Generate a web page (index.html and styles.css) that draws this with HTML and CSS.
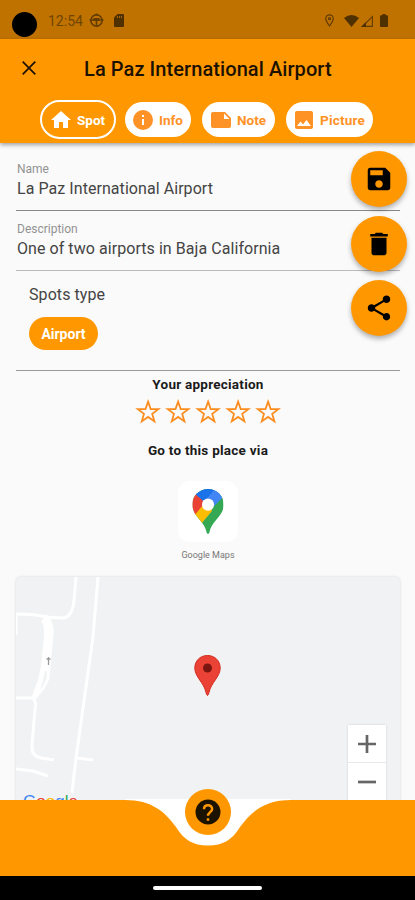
FILE: index.html
```html
<!DOCTYPE html>
<html lang="en">
<head>
    <meta charset="UTF-8">
    <meta name="viewport" content="width=device-width, initial-scale=1.0">
    <title>La Paz International Airport</title>
    <link rel="stylesheet" href="styles.css">
</head>
<body>
<div class="phone">
    <!-- Status bar -->
    <div class="status-bar">
        <span class="camera"></span>
        <span class="time">12:54</span>
        <svg class="status-wheel" width="15" height="15" viewBox="0 0 15 15" fill="none" stroke="#623c00" stroke-width="1.6">
            <circle cx="7.5" cy="7.5" r="5.6"/>
            <path d="M0.5 7h14M7.5 8v5M7.5 0.5v2" />
            <path d="M4.5 5h6v3h-6z" fill="#623c00" stroke="none"/>
        </svg>
        <svg class="status-card" width="10" height="13" viewBox="0 0 10 13">
            <path d="M3.5 0H9q1 0 1 1v11q0 1-1 1H1q-1 0-1-1V3.5z" fill="#4f3000"/>
            <path d="M3.5 2v2M5.5 2v2M7.5 2v2" stroke="#a76500"/>
        </svg>
        <span class="spacer"></span>
        <svg class="status-pin" width="9" height="13" viewBox="0 0 9 13" fill="none" stroke="#623c00" stroke-width="1.2">
            <path d="M4.5 12C2 8.7 .7 6.6 .7 4.6a3.8 3.8 0 0 1 7.6 0C8.3 6.6 7 8.7 4.5 12z"/>
            <circle cx="4.5" cy="4.7" r="1"/>
        </svg>
        <svg width="15" height="12" viewBox="0 0 15 12"><path d="M0 3Q7.5-3 15 3L7.5 12z" fill="#4f3000"/></svg>
        <svg class="status-signal" width="12" height="12" viewBox="0 0 12 12"><path d="M1.5 11.4L11.4 1.5v9.9z" fill="none" stroke="#623c00" stroke-width="1.1"/><path d="M0 12l5-5v5z" fill="#4f3000"/></svg>
        <svg class="status-battery" width="8" height="13" viewBox="0 0 8 13"><path d="M2.5 0h3v1.3H7q1 0 1 1V12q0 1-1 1H1q-1 0-1-1V2.3q0-1 1-1h1.5z" fill="#4f3000"/></svg>
    </div>

    <!-- App bar -->
    <div class="app-bar">
        <div class="title-row">
            <svg class="close" width="14" height="14" viewBox="0 0 14 14"><path d="M.7.7l12.6 12.6M13.3.7L.7 13.3" stroke="#1c1100" stroke-width="1.7"/></svg>
            <h1>La Paz International Airport</h1>
        </div>
        <div class="tabs">
            <div class="tab tab-active">
                <svg width="24" height="24" viewBox="0 0 24 24"><path d="M10 20v-6h4v6h5v-8h3L12 3 2 12h3v8z"/></svg>
                <span>Spot</span>
            </div>
            <div class="tab tab-info">
                <svg width="24" height="24" viewBox="0 0 24 24"><path d="M12 2a10 10 0 1 0 0 20 10 10 0 0 0 0-20zm1 15h-2v-6h2v6zm0-8h-2V7h2v2z"/></svg>
                <span>Info</span>
            </div>
            <div class="tab tab-note">
                <svg width="24" height="24" viewBox="0 0 24 24"><path d="M22 10l-6-6H4c-1.1 0-2 .9-2 2v12.01c0 1.1.9 1.99 2 1.99h16c1.1 0 2-.9 2-2v-8zm-7-4.5l5.5 5.5H15V5.5z"/></svg>
                <span>Note</span>
            </div>
            <div class="tab tab-picture">
                <svg width="24" height="24" viewBox="0 0 24 24"><path d="M21 19V5c0-1.1-.9-2-2-2H5c-1.1 0-2 .9-2 2v14c0 1.1.9 2 2 2h14c1.1 0 2-.9 2-2zM8.5 13.5l2.5 3.01L14.5 12l4.5 6H5l3.5-4.5z"/></svg>
                <span>Picture</span>
            </div>
        </div>
    </div>

    <!-- Spot details -->
    <div class="content">
        <div class="field">
            <div class="label">Name</div>
            <div class="value">La Paz International Airport</div>
        </div>
        <div class="field field-description">
            <div class="label">Description</div>
            <div class="value">One of two airports in Baja California</div>
        </div>
        <div class="spot-type">
            <div class="type-title">Spots type</div>
            <span class="chip">Airport</span>
        </div>

        <div class="heading">Your appreciation</div>
        <div class="stars">
            <svg viewBox="0 0 24 24"><path d="M12 3.2l2.2 6.3 6.6.1-5.3 4 1.9 6.4-5.4-3.8-5.4 3.8 1.9-6.4L3.2 9.6l6.6-.1z"/></svg>
            <svg viewBox="0 0 24 24"><path d="M12 3.2l2.2 6.3 6.6.1-5.3 4 1.9 6.4-5.4-3.8-5.4 3.8 1.9-6.4L3.2 9.6l6.6-.1z"/></svg>
            <svg viewBox="0 0 24 24"><path d="M12 3.2l2.2 6.3 6.6.1-5.3 4 1.9 6.4-5.4-3.8-5.4 3.8 1.9-6.4L3.2 9.6l6.6-.1z"/></svg>
            <svg viewBox="0 0 24 24"><path d="M12 3.2l2.2 6.3 6.6.1-5.3 4 1.9 6.4-5.4-3.8-5.4 3.8 1.9-6.4L3.2 9.6l6.6-.1z"/></svg>
            <svg viewBox="0 0 24 24"><path d="M12 3.2l2.2 6.3 6.6.1-5.3 4 1.9 6.4-5.4-3.8-5.4 3.8 1.9-6.4L3.2 9.6l6.6-.1z"/></svg>
        </div>
        <div class="heading heading-via">Go to this place via</div>
        <div class="maps-link">
            <div class="maps-logo">
                <svg width="32" height="45" viewBox="0 0 32 46">
                    <defs>
                        <clipPath id="pin"><path d="M16 0C7 0 0 7 0 16c0 12 13 17 14.6 28.4C14.9 46.3 17.1 46.3 17.4 44.4 19 33 32 28 32 16 32 7 25 0 16 0z"/></clipPath>
                    </defs>
                    <g clip-path="url(#pin)">
                        <path d="M0 0h32v46H0z" fill="#34a853"/>
                        <path d="M-2 28L11 13 23 19 7 38z" fill="#fbbc04"/>
                        <path d="M2 27L13 14 4 4H-2v23z" fill="#ea4335"/>
                        <path d="M3.5 5.5L12 13 20 15 29 6V0H3z" fill="#1a73e8"/>
                        <path d="M22 1L13 12 20 20 31 9 27 0z" fill="#4285f4"/>
                        <path d="M20 20L31 9v15H20z" fill="#34a853"/>
                    </g>
                    <circle cx="16" cy="16" r="6.2" fill="#fff"/>
                </svg>
            </div>
            <div class="maps-label">Google Maps</div>
        </div>

        <!-- Map -->
        <div class="map">
            <svg class="roads" width="384" height="240" viewBox="0 0 384 240" fill="none" stroke="#fff" stroke-width="3">
                <path d="M60 0L58 24Q56 41 46 41L31 40Q20 37 0 37" />
                <path d="M0 36V58" />
                <path d="M29 40Q37 46 36 57L32 101Q30 109 19 121" />
                <path d="M28 41Q34 46 32 64L29 94" stroke-width="9"/>
                <path d="M27 92L24 105 18 121" stroke-width="5"/>
                <path d="M0 121H17Q21 126 19 132L16 168Q15 179 25 181L38 183" />
                <path d="M82 0L77 60 60 181 56 216M61 181L77 183M0 192L17 194 32 199" />
                <path d="M32.5 80v8M30.5 82h4" stroke="#999" stroke-width="1.3"/>
            </svg>
            <svg class="marker" width="27" height="42" viewBox="0 0 27 42">
                <path d="M13.5 .5C6 .5 .8 6 .8 13c0 9 9.2 14.5 11.2 24.5q1.5 6 3 0C17 27.5 26.2 22 26.2 13 26.2 6 21 .5 13.5 .5z" fill="#ea4335" stroke="#d32c22"/>
                <circle cx="13.5" cy="13" r="4.5" fill="#7b1510"/>
            </svg>
            <div class="zoom-control">
                <div class="zoom-button"><svg width="18" height="18" viewBox="0 0 18 18"><path d="M0 9h18M9 0v18" stroke="#666" stroke-width="2.7"/></svg></div>
                <div class="zoom-button"><svg width="18" height="18" viewBox="0 0 18 18"><path d="M0 9h18" stroke="#666" stroke-width="2.7"/></svg></div>
            </div>
            <div class="google"><span class="blue">G</span><span class="red">o</span><span class="yellow">o</span><span class="blue">g</span><span class="green">l</span><span class="red">e</span></div>
        </div>

        <!-- Floating actions -->
        <div class="actions">
            <div class="action"><svg viewBox="0 0 24 24"><path d="M17 3H5a2 2 0 0 0-2 2v14c0 1.1.9 2 2 2h14c1.1 0 2-.9 2-2V7l-4-4zm-5 16c-1.66 0-3-1.34-3-3s1.34-3 3-3 3 1.34 3 3-1.34 3-3 3zm3-10H5V5h10v4z"/></svg></div>
            <div class="action"><svg viewBox="0 0 24 24"><path d="M6 19c0 1.1.9 2 2 2h8c1.1 0 2-.9 2-2V7H6v12zM19 4h-3.5l-1-1h-5l-1 1H5v2h14V4z"/></svg></div>
            <div class="action"><svg viewBox="0 0 24 24"><path d="M18 16.08c-.76 0-1.44.3-1.96.77L8.91 12.7c.05-.23.09-.46.09-.7s-.04-.47-.09-.7l7.05-4.11c.54.5 1.25.81 2.04.81 1.66 0 3-1.34 3-3s-1.34-3-3-3-3 1.34-3 3c0 .24.04.47.09.7L8.04 9.81C7.5 9.31 6.79 9 6 9c-1.66 0-3 1.34-3 3s1.34 3 3 3c.79 0 1.5-.31 2.04-.81l7.12 4.16c-.05.21-.08.43-.08.65 0 1.61 1.31 2.92 2.92 2.92s2.92-1.31 2.92-2.92-1.31-2.92-2.92-2.92z"/></svg></div>
        </div>
    </div>

    <!-- Bottom bar with notch -->
    <div class="bottom-bar">
        <svg class="notch" width="166" height="47" viewBox="0 0 166 47"><path d="M0 0V1C27 1 40 13 51 28 59 41 68 46.5 83 46.5S107 41 115 28C126 13 139 1 166 1V0z" fill="#fff"/></svg>
        <div class="help"><svg width="30" height="30" viewBox="0 0 24 24"><circle cx="12" cy="12" r="10" fill="#1c1200"/><path d="M8.8 9.7C8.8 7.7 10.2 6.5 12 6.5S15.3 7.7 15.3 9.5C15.3 12 12 12.2 12 15" fill="none" stroke="#ff9800" stroke-width="2"/><path d="M11 17h2v2h-2z" fill="#ff9800"/></svg></div>
    </div>
    <div class="system-bar"><span class="home-line"></span></div>
</div>
</body>
</html>
```
FILE: styles.css
```css
body {
    margin: 0;
    font-family: Roboto, sans-serif;
    background-color: #fafafa;
}
svg {
    display: block;
    flex: none;
}
.phone {
    display: flex;
    flex-direction: column;
    width: 415px;
    height: 900px;
    overflow: hidden;
}

/* status bar */
.status-bar {
    display: flex;
    align-items: center;
    box-sizing: border-box;
    height: 39px;
    flex: none;
    padding: 2px 27px 0 12px;
    background-color: #bf7200;
}
.camera {
    width: 25px;
    height: 25px;
    margin-top: 8px;
    border-radius: 50%;
    background-color: #000;
}
.time {
    width: 34px;
    margin-left: 11px;
    font-size: 14px;
    white-space: nowrap;
    color: #704500;
}
.status-wheel {
    margin-left: 7px;
}
.status-card {
    margin-left: 10px;
}
.spacer {
    flex: 1;
}
.status-pin {
    margin-right: 10px;
}
.status-signal {
    margin-left: 2px;
}
.status-battery {
    margin-left: 7px;
}

/* app bar */
.app-bar {
    position: relative;
    z-index: 1;
    height: 104px;
    flex: none;
    background-color: #ff9800;
    box-shadow: 0 2px 4px rgba(0, 0, 0, 0.35);
}
.title-row {
    display: flex;
    align-items: center;
    height: 58px;
}
.close {
    margin-left: 22px;
}
h1 {
    margin: 2px 0 0 48px;
    font-size: 20px;
    font-weight: 500;
    letter-spacing: 0.08px;
    white-space: nowrap;
    color: #1c1100;
}
.tabs {
    display: flex;
    align-items: center;
    padding-left: 40px;
    margin-top: 3px;
    height: 39px;
}
.tab {
    display: flex;
    align-items: center;
    box-sizing: border-box;
    height: 35px;
    padding-left: 6px;
    gap: 4px;
    border-radius: 20px;
    font-size: 13.5px;
    font-weight: 700;
    color: #ff9226;
    background-color: #fff;
}
.tab svg {
    fill: #ff9226;
}
.tab-active {
    width: 76px;
    height: 39px;
    padding-left: 7px;
    border: 2px solid #fff;
    color: #fff;
    background-color: #ff9800;
}
.tab-active svg {
    fill: #fff;
}
.tab-info {
    width: 66px;
    margin-left: 9px;
}
.tab-note {
    width: 73px;
    padding-left: 7px;
    margin-left: 11px;
}
.tab-picture {
    width: 87px;
    margin-left: 11px;
    letter-spacing: 0.2px;
}

/* content */
.content {
    position: relative;
    flex: 1;
    min-height: 0;
    padding: 0 15px 0 16px;
    overflow: hidden;
}
.field {
    box-sizing: border-box;
    height: 68px;
    padding: 18px 0 0 1px;
    border-bottom: 1px solid #888;
}
.field-description {
    height: 60px;
    padding-top: 10px;
    border-bottom-color: #bbb;
}
.label {
    font-size: 12px;
    line-height: 16px;
    color: #929292;
}
.value {
    margin-top: 2px;
    font-size: 16px;
    line-height: 20px;
    letter-spacing: 0.06px;
    color: #444;
}
.spot-type {
    box-sizing: border-box;
    height: 100px;
    padding: 14px 0 0 13px;
    border-bottom: 1px solid #999;
}
.type-title {
    font-size: 16px;
    line-height: 20px;
    letter-spacing: 0.08px;
    color: #444;
}
.chip {
    display: flex;
    align-items: center;
    justify-content: center;
    width: 69px;
    height: 33px;
    margin-top: 12px;
    border-radius: 17px;
    font-size: 14px;
    font-weight: 700;
    color: #fff;
    background-color: #ff9800;
}
.heading {
    margin-top: 4px;
    font-size: 13.5px;
    line-height: 18px;
    font-weight: 700;
    letter-spacing: 0.25px;
    text-align: center;
    color: #1a1a1a;
}
.stars {
    display: flex;
    justify-content: center;
    gap: 2px;
    margin-top: 4px;
}
.stars svg {
    width: 28.2px;
    height: 30px;
    fill: none;
    stroke: #fb8c1e;
    stroke-width: 1.5;
}
.heading-via {
    margin-top: 14px;
}
.maps-link {
    display: flex;
    flex-direction: column;
    align-items: center;
    margin-top: 22px;
}
.maps-logo {
    display: flex;
    align-items: center;
    justify-content: center;
    width: 60px;
    height: 61px;
    border-radius: 12px;
    background-color: #fff;
}
.maps-label {
    margin-top: 7px;
    font-size: 9px;
    line-height: 12px;
    color: #777;
}

/* map */
.map {
    position: relative;
    height: 240px;
    margin-top: 16px;
    border-radius: 5px;
    background-color: #f0f2f3;
    box-shadow: 0 0 3px rgba(0, 0, 0, 0.15);
    overflow: hidden;
}
.marker {
    position: absolute;
    left: 178px;
    top: 78px;
}
.zoom-control {
    position: absolute;
    right: 14px;
    top: 148px;
    width: 38px;
    background-color: #fff;
    box-shadow: 0 0 2px rgba(0, 0, 0, 0.15);
}
.zoom-button {
    display: flex;
    align-items: center;
    justify-content: center;
    height: 37px;
    border-bottom: 1px solid #e8e8e8;
}
.google {
    position: absolute;
    left: 7px;
    top: 213px;
    font-family: "Liberation Sans", sans-serif;
    font-size: 17px;
    line-height: 24px;
}
.blue {
    color: #4285f4;
}
.red {
    color: #ea4335;
}
.yellow {
    color: #fbbc04;
}
.green {
    color: #34a853;
}

/* floating actions */
.actions {
    position: absolute;
    right: 8px;
    top: 8px;
    display: flex;
    flex-direction: column;
    gap: 8.5px;
}
.action {
    display: flex;
    align-items: center;
    justify-content: center;
    width: 56px;
    height: 56px;
    border-radius: 50%;
    background-color: #ff9800;
    box-shadow: 0 3px 5px rgba(0, 0, 0, 0.3);
}
.action svg {
    width: 30px;
    height: 30px;
    fill: #000;
}

/* bottom bar */
.bottom-bar {
    position: relative;
    height: 76px;
    flex: none;
    background-color: #ff9800;
}
.notch {
    position: absolute;
    left: 125px;
    top: -1px;
}
.help {
    position: absolute;
    left: 185px;
    top: -11px;
    display: flex;
    align-items: center;
    justify-content: center;
    width: 46px;
    height: 46px;
    border-radius: 50%;
    background-color: #ff9800;
}
.system-bar {
    display: flex;
    align-items: center;
    justify-content: center;
    height: 24px;
    flex: none;
    background-color: #000;
}
.home-line {
    width: 109px;
    height: 4px;
    border-radius: 2px;
    background-color: #fff;
}
```
